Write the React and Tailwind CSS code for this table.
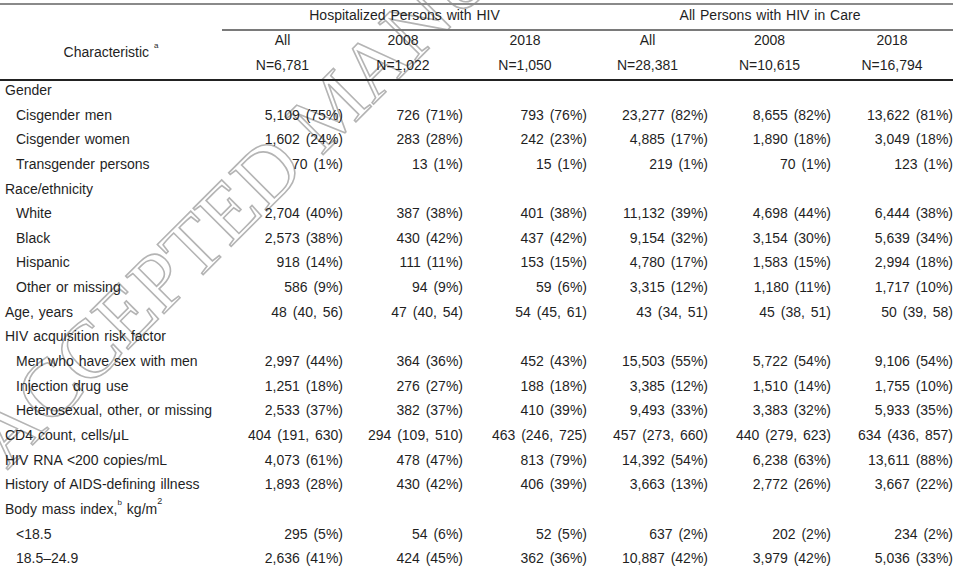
import React from "react";

const widths = ["w-[121px]", "w-[120px]", "w-[124px]", "w-[121px]", "w-[123px]", "w-[122px]"];

const subHeads = [
  ["All", "N=6,781"],
  ["2008", "N=1,022"],
  ["2018", "N=1,050"],
  ["All", "N=28,381"],
  ["2008", "N=10,615"],
  ["2018", "N=16,794"],
];

const rows = [
  { label: "Gender" },
  { label: "Cisgender men", sub: true, v: ["5,109 (75%)", "726 (71%)", "793 (76%)", "23,277 (82%)", "8,655 (82%)", "13,622 (81%)"] },
  { label: "Cisgender women", sub: true, v: ["1,602 (24%)", "283 (28%)", "242 (23%)", "4,885 (17%)", "1,890 (18%)", "3,049 (18%)"] },
  { label: "Transgender persons", sub: true, v: ["70 (1%)", "13 (1%)", "15 (1%)", "219 (1%)", "70 (1%)", "123 (1%)"] },
  { label: "Race/ethnicity" },
  { label: "White", sub: true, v: ["2,704 (40%)", "387 (38%)", "401 (38%)", "11,132 (39%)", "4,698 (44%)", "6,444 (38%)"] },
  { label: "Black", sub: true, v: ["2,573 (38%)", "430 (42%)", "437 (42%)", "9,154 (32%)", "3,154 (30%)", "5,639 (34%)"] },
  { label: "Hispanic", sub: true, v: ["918 (14%)", "111 (11%)", "153 (15%)", "4,780 (17%)", "1,583 (15%)", "2,994 (18%)"] },
  { label: "Other or missing", sub: true, v: ["586 (9%)", "94 (9%)", "59 (6%)", "3,315 (12%)", "1,180 (11%)", "1,717 (10%)"] },
  { label: "Age, years", v: ["48 (40, 56)", "47 (40, 54)", "54 (45, 61)", "43 (34, 51)", "45 (38, 51)", "50 (39, 58)"] },
  { label: "HIV acquisition risk factor" },
  { label: "Men who have sex with men", sub: true, v: ["2,997 (44%)", "364 (36%)", "452 (43%)", "15,503 (55%)", "5,722 (54%)", "9,106 (54%)"] },
  { label: "Injection drug use", sub: true, v: ["1,251 (18%)", "276 (27%)", "188 (18%)", "3,385 (12%)", "1,510 (14%)", "1,755 (10%)"] },
  { label: "Heterosexual, other, or missing", sub: true, v: ["2,533 (37%)", "382 (37%)", "410 (39%)", "9,493 (33%)", "3,383 (32%)", "5,933 (35%)"] },
  { label: "CD4 count, cells/μL", v: ["404 (191, 630)", "294 (109, 510)", "463 (246, 725)", "457 (273, 660)", "440 (279, 623)", "634 (436, 857)"] },
  { label: "HIV RNA <200 copies/mL", v: ["4,073 (61%)", "478 (47%)", "813 (79%)", "14,392 (54%)", "6,238 (63%)", "13,611 (88%)"] },
  { label: "History of AIDS-defining illness", v: ["1,893 (28%)", "430 (42%)", "406 (39%)", "3,663 (13%)", "2,772 (26%)", "3,667 (22%)"] },
  { label: "bmi" },
  { label: "<18.5", sub: true, v: ["295 (5%)", "54 (6%)", "52 (5%)", "637 (2%)", "202 (2%)", "234 (2%)"] },
  { label: "18.5–24.9", sub: true, v: ["2,636 (41%)", "424 (45%)", "362 (36%)", "10,887 (42%)", "3,979 (42%)", "5,036 (33%)"] },
];

function Label({ row }) {
  if (row.label === "bmi") {
    return (
      <span>
        Body mass index,<sup className="text-[8px] align-[5px]">b</sup> kg/m<sup className="text-[9px] align-[5px]">2</sup>
      </span>
    );
  }
  return <span>{row.label}</span>;
}

export default function App() {
  return (
    <div className="relative w-[960px] h-[571px] overflow-hidden bg-white text-[#1f1f1f] text-[14px] [word-spacing:1px] font-['Liberation_Sans',Arial,sans-serif]">
      {/* watermark */}
      <div className="absolute left-[8px] top-[471px] w-0 h-0 -rotate-45 origin-top-left pointer-events-none">
        <span className="absolute left-0 bottom-[-13px] whitespace-nowrap leading-none text-[82px] text-transparent [-webkit-text-stroke:1.6px_#b4b4b4] [word-spacing:0] font-['Liberation_Serif','Times_New_Roman',serif]">
          ACCEPTED MANUSCRIPT
        </span>
      </div>

      <div className="relative w-[953px]">
        {/* header */}
        <div className="mt-[3px] border-t-2 border-[#8a8a8a] border-b-2 border-b-[#222] flex">
          <div className="w-[222px] pt-[38px] text-center leading-[18px]">
            Characteristic <sup className="text-[8px] align-[5px]">a</sup>
          </div>
          <div className="flex-1 flex flex-col pb-[5px]">
            <div className="flex border-b-2 border-[#7a7a7a]">
              <div className="w-[365px] h-[24px] leading-[20px] text-center">Hospitalized Persons with HIV</div>
              <div className="w-[366px] h-[24px] leading-[20px] text-center">All Persons with HIV in Care</div>
            </div>
            <div className="flex">
              {subHeads.map((h, i) => (
                <div key={i} className={`${widths[i]} h-[18px] leading-[18px] text-center`}>{h[0]}</div>
              ))}
            </div>
            <div className="flex mt-[7px]">
              {subHeads.map((h, i) => (
                <div key={i} className={`${widths[i]} h-[18px] leading-[18px] text-center`}>{h[1]}</div>
              ))}
            </div>
          </div>
        </div>

        {/* body */}
        <div className="flex flex-col">
          {rows.map((row, r) => (
            <div key={r} className="flex h-[24.65px] leading-[18px]">
              <div className={`w-[222px] whitespace-nowrap ${row.sub ? "pl-[16px]" : "pl-[5px]"}`}>
                <Label row={row} />
              </div>
              {row.v &&
                row.v.map((val, i) => (
                  <div key={i} className={`${widths[i]} text-right whitespace-nowrap [word-spacing:2px]`}>{val}</div>
                ))}
            </div>
          ))}
        </div>
      </div>
    </div>
  );
}
